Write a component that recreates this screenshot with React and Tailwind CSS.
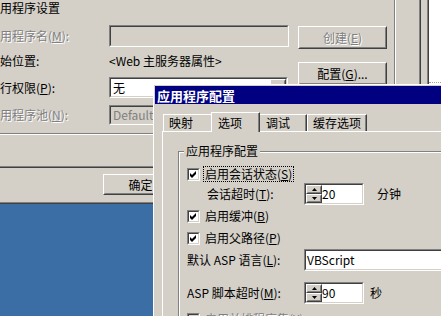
import React from "react"

const sunkenOuter = "border border-t-[#808080] border-l-[#808080] border-r-white border-b-white"
const sunkenInner = "border border-t-[#404040] border-l-[#404040] border-r-[#d4d0c8] border-b-[#d4d0c8]"
const raisedOuter = "border border-t-white border-l-white border-r-[#404040] border-b-[#404040]"
const raisedInner = "border border-t-[#d4d0c8] border-l-[#d4d0c8] border-r-[#808080] border-b-[#808080]"
const disabledText = "text-[#808080] [text-shadow:1px_1px_0_#fff]"

function Bevel({ raised, className = "", innerClassName = "", children }) {
  return (
    <div className={`${raised ? raisedOuter : sunkenOuter} ${className}`}>
      <div className={`h-full ${raised ? raisedInner : sunkenInner} ${innerClassName}`}>{children}</div>
    </div>
  )
}

const K = ({ children }) => <span className="underline underline-offset-[1px]">{children}</span>

function Check({ checked = true, disabled = false }) {
  return (
    <div className={`w-[13px] h-[13px] shrink-0 ${sunkenOuter}`}>
      <div
        className={`h-full flex items-center justify-center ${sunkenInner} ${disabled ? "bg-[#d4d0c8]" : "bg-white"}`}
      >
        {checked && (
          <svg width="7" height="7" viewBox="0 0 7 7">
            <polygon points="0,2 2,4 6,0 6,3 2,7 0,5" fill="#000" />
          </svg>
        )}
      </div>
    </div>
  )
}

function Spin({ value }) {
  return (
    <Bevel className="w-[60px] h-[22px] shrink-0" innerClassName="bg-white flex">
      <div className="flex flex-col w-[16px]">
        <Bevel raised className="h-[9px]" innerClassName="bg-[#d4d0c8] flex items-center justify-center">
          <svg width="5" height="3" viewBox="0 0 5 3">
            <polygon points="2.5,0 5,3 0,3" fill="#000" />
          </svg>
        </Bevel>
        <Bevel raised className="h-[9px]" innerClassName="bg-[#d4d0c8] flex items-center justify-center">
          <svg width="5" height="3" viewBox="0 0 5 3">
            <polygon points="0,0 5,0 2.5,3" fill="#000" />
          </svg>
        </Bevel>
      </div>
      <span className="leading-[18px]">{value}</span>
    </Bevel>
  )
}

function Tab({ label, active, className = "" }) {
  return (
    <div
      className={`border-l border-t border-white border-r border-r-[#404040] bg-[#d4d0c8] ${
        active ? "h-[20px] -mb-[1px] relative z-10" : "h-[17px]"
      } ${className}`}
    >
      <div className="h-full border-r border-[#808080] flex items-center">{label}</div>
    </div>
  )
}

function BackWindow() {
  return (
    <div className="w-[429px] h-full border-r border-b border-[#404040]">
      <div className="h-full border-r border-b border-[#808080] pr-[6px] flex flex-col">
        <div className="h-[168px] border-r border-b border-[#404040]">
          <div className="h-full border-r border-b border-[#808080]">
            <div className="w-[396px] h-[135px] border-r border-b border-white">
              <div className="h-full border-r border-b border-[#808080] flex">
                <div className="-ml-[12px] w-[301px] shrink-0 flex flex-col">
                  <div className="h-[16px] flex items-center">应用程序设置</div>
                  <div className="mt-[9px] h-[22px] flex items-center">
                    <span className={`w-[121px] ${disabledText}`}>
                      应用程序名(<K>M</K>):
                    </span>
                    <Bevel className="w-[180px] h-[22px]" innerClassName="bg-[#d4d0c8]" />
                  </div>
                  <div className="mt-[6px] h-[16px] flex items-center">
                    <span className="w-[121px]">起始位置:</span>
                    <span>&lt;Web 主服务器属性&gt;</span>
                  </div>
                  <div className="mt-[8px] h-[21px] flex items-center">
                    <span className="w-[121px]">
                      执行权限(<K>P</K>):
                    </span>
                    <Bevel className="w-[179px] h-[21px]" innerClassName="bg-white flex items-center">
                      <span className="flex-1 pl-[2px]">无</span>
                      <Bevel raised className="w-[16px] h-full" innerClassName="bg-[#d4d0c8] flex items-center justify-center">
                        <svg width="7" height="4" viewBox="0 0 7 4">
                          <polygon points="0,0 7,0 3.5,4" fill="#000" />
                        </svg>
                      </Bevel>
                    </Bevel>
                  </div>
                  <div className="mt-[7px] h-[20px] flex items-center">
                    <span className={`w-[121px] ${disabledText}`}>
                      应用程序池(<K>N</K>):
                    </span>
                    <Bevel className="w-[180px] h-[20px]" innerClassName="bg-[#d4d0c8] flex items-center pl-[2px] text-[#808080]">
                      DefaultAppPool
                    </Bevel>
                  </div>
                </div>
                <div className="ml-[9px] pt-[26px] flex flex-col gap-[13px]">
                  <Bevel raised className="w-[89px] h-[23px]" innerClassName="flex items-center justify-center">
                    <span className={disabledText}>
                      创建(<K>E</K>)
                    </span>
                  </Bevel>
                  <Bevel raised className="w-[89px] h-[23px]" innerClassName="flex items-center justify-center">
                    配置(<K>G</K>)...
                  </Bevel>
                </div>
              </div>
            </div>
          </div>
        </div>
        <div className="pt-[6px] pl-[103px]">
          <Bevel raised className="w-[75px] h-[21px]" innerClassName="flex items-center justify-center">
            确定
          </Bevel>
        </div>
      </div>
    </div>
  )
}

function ConfigDialog() {
  return (
    <div className="absolute left-[153px] top-[84px] w-[320px] h-[260px] border-l border-t border-white bg-[#d4d0c8] p-[1px]">
      <div className="h-[18px] bg-[#000080] text-white font-bold text-[13px] flex items-center pl-[2px]">
        应用程序配置
      </div>
      <div className="pl-[7px] pt-[8px]">
        <div className="h-[19px] pl-[1px] flex items-end">
          <Tab label="映射" className="w-[50px] pl-[5px]" />
          <Tab label="选项" active className="w-[49px] -ml-[2px] pl-[6px]" />
          <Tab label="调试" className="w-[49px] -ml-[2px] pl-[7px]" />
          <Tab label="缓存选项" className="w-[60px] pl-[5px]" />
        </div>
        <div className="h-[200px] border-l border-t border-white pl-[15px] pt-[12px]">
          <fieldset className="w-[300px] h-[190px] border border-[#808080] shadow-[inset_1px_1px_0_#fff,1px_1px_0_#fff]">
            <legend className="ml-[5px] px-[2px] leading-[14px] bg-[#d4d0c8]">应用程序配置</legend>
            <div className="pl-[8px] flex flex-col">
              <div className="mt-[8px] h-[16px] flex items-center">
                <Check />
                <span className="ml-[3px] h-[16px] px-[1px] border border-dotted border-black flex items-center">
                  启用会话状态(<K>S</K>)
                </span>
              </div>
              <div className="mt-[1px] h-[22px] flex items-center">
                <span className="ml-[20px] w-[97px]">
                  会话超时(<K>T</K>):
                </span>
                <Spin value="20" />
                <span className="ml-[13px]">分钟</span>
              </div>
              <div className="mt-[3px] h-[16px] flex items-center">
                <Check />
                <span className="ml-[5px]">
                  启用缓冲(<K>B</K>)
                </span>
              </div>
              <div className="mt-[6px] h-[16px] flex items-center">
                <Check />
                <span className="ml-[5px]">
                  启用父路径(<K>P</K>)
                </span>
              </div>
              <div className="mt-[3px] h-[22px] flex items-center">
                <span className="w-[117px]">
                  默认 ASP 语言(<K>L</K>):
                </span>
                <Bevel className="flex-1 h-[22px]" innerClassName="bg-white flex items-center pl-[1px]">
                  VBScript
                </Bevel>
              </div>
              <div className="mt-[11px] h-[22px] flex items-center">
                <span className="w-[117px]">
                  ASP 脚本超时(<K>M</K>):
                </span>
                <Spin value="90" />
                <span className="ml-[6px]">秒</span>
              </div>
              <div className="mt-[7px] h-[16px] flex items-center">
                <Check checked={false} disabled />
                <span className={`ml-[5px] ${disabledText}`}>
                  启用并排程序集(<K>Y</K>)
                </span>
              </div>
            </div>
          </fieldset>
        </div>
      </div>
    </div>
  )
}

export default function App() {
  return (
    <div className="relative w-[441px] h-[316px] overflow-hidden bg-[#d4d0c8] text-[12px] leading-none text-black font-['Noto_Sans_CJK_SC','Noto_Sans',sans-serif] flex flex-col">
      <div className="h-[204px] shrink-0 flex">
        <BackWindow />
        <div className="flex-1 bg-white pt-[82px]">
          <div className="border-t border-dotted border-[#a0a0a0]" />
        </div>
      </div>
      <div className="flex-1 bg-[#3a6ea5]" />
      <ConfigDialog />
    </div>
  )
}
